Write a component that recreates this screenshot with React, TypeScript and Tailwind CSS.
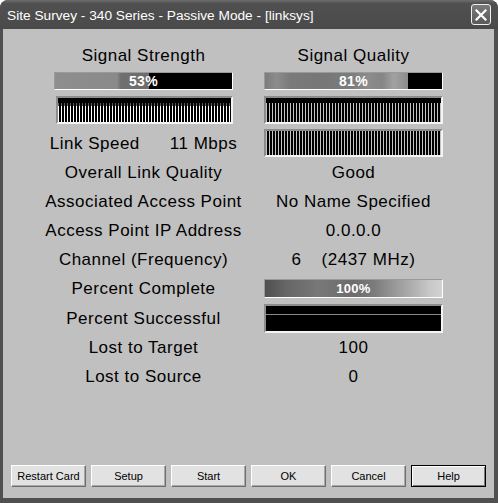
import React from "react";

function Bar({ pct, fill, label, size }: { pct: number; fill: string; label: string; size: string }) {
  return (
    <div className="relative h-full w-full bg-black border-t border-l border-t-[#9a9a9a] border-l-[#9a9a9a] border-b border-r border-b-white border-r-white">
      <div className={`h-full ${fill}`} style={{ width: `${pct}%` }} />
      <span className={`absolute inset-0 flex items-center justify-center text-white font-bold tracking-[0.3px] ${size}`}>{label}</span>
    </div>
  );
}

function Btn({ label, def }: { label: string; def?: boolean }) {
  return (
    <div
      className={
        def
          ? "w-[75px] h-[22px] flex items-center justify-center bg-[#e2e2e2] border border-black shadow-[inset_1px_1px_0_#ffffff,inset_-1px_-1px_0_#7a7a7a] text-[11px] text-black"
          : "w-[75px] h-[22px] flex items-center justify-center bg-[#e2e2e2] border border-t-white border-l-white border-b-[#6e6e6e] border-r-[#6e6e6e] shadow-[inset_-1px_-1px_0_#a8a8a8] text-[11px] text-black"
      }
    >
      {label}
    </div>
  );
}

const row = "grid grid-cols-[179px_179px] gap-x-[31px] justify-center items-center";
const txt = "flex justify-center text-[17px] tracking-[0.5px] leading-none text-black whitespace-nowrap";

export default function App() {
  return (
    <div className="w-[498px] h-[503px] bg-white font-['Liberation_Sans',Arial,sans-serif]">
      <div className="w-[498px] h-[503px] flex flex-col rounded-t-[8px] overflow-hidden bg-[#4c4c4c]">
        {/* Title bar */}
        <div className="h-[29px] flex items-center justify-between pl-[7px] pr-[7px] bg-[linear-gradient(180deg,#6e6e6e_0%,#505050_12%,#4a4a4a_100%)]">
          <span className="text-white text-[13.7px] leading-none pt-[2px] whitespace-nowrap">
            Site Survey - 340 Series - Passive Mode - [linksys]
          </span>
          <div className="w-[20px] h-[21px] rounded-[3px] border border-[#f0f0f0] bg-[linear-gradient(180deg,#7a7a7a_0%,#5a5a5a_100%)] flex items-center justify-center">
            <svg width="12" height="12" viewBox="0 0 12 12">
              <path d="M1.5 1.5 L10.5 10.5 M10.5 1.5 L1.5 10.5" stroke="#ffffff" strokeWidth="2.2" strokeLinecap="square" />
            </svg>
          </div>
        </div>

        {/* Frame + body */}
        <div className="flex-1 flex pl-[3px] pr-[4px] pb-[5px] bg-[#505050]">
          <div className="flex-1 bg-[#c0c0c0] flex flex-col pt-[13px] pb-[11px]">
            {/* headers */}
            <div className={`${row} h-[26px]`}>
              <div className={txt}>Signal Strength</div>
              <div className={txt}>Signal Quality</div>
            </div>
            {/* progress bars */}
            <div className={`${row} h-[18px] mt-[4px]`}>
              <Bar
                pct={53}
                label="53%"
                size="text-[14px]"
                fill="bg-[linear-gradient(90deg,#8e8e8e_0%,#8a8a8a_66%,#707070_70%,#6c6c6c_100%)]"
              />
              <Bar
                pct={81}
                label="81%"
                size="text-[14px]"
                fill="bg-[linear-gradient(90deg,#7c7c7c_0%,#8c8c8c_8%,#7a7a7a_18%,#777777_40%,#7c7c7c_60%,#8c8c8c_72%,#858585_82%,#a2a2a2_90%,#8c8c8c_100%)]"
              />
            </div>
            {/* pattern bars */}
            <div className={`${row} h-[28px] mt-[6px]`}>
              <div className="h-full w-[177px] ml-[2px] flex flex-col border-t-2 border-l-2 border-t-[#8c8c8c] border-l-[#8c8c8c] border-b-2 border-r-2 border-b-[#f4f4f4] border-r-[#f4f4f4] bg-black">
                <div className="h-[5px] bg-black" />
                <div className="h-[3px] bg-[repeating-linear-gradient(90deg,#5a5a5a_0px,#5a5a5a_1px,#000000_1px,#000000_3px)]" />
                <div className="flex-1 bg-[repeating-linear-gradient(90deg,#ffffff_0px,#ffffff_1px,#000000_1px,#000000_3px)]" />
              </div>
              <div className="h-full w-full flex flex-col border-t-2 border-l-2 border-t-[#8c8c8c] border-l-[#8c8c8c] border-b-2 border-r-2 border-b-[#f4f4f4] border-r-[#f4f4f4] bg-black">
                <div className="h-[5px] bg-black" />
                <div className="flex-1 bg-[repeating-linear-gradient(90deg,#c4c4c4_0px,#c4c4c4_1px,#000000_1px,#000000_3px)]" />
              </div>
            </div>
            {/* link speed */}
            <div className={`${row} h-[28px] mt-[5px]`}>
              <div className="flex justify-center gap-[30px]">
                <span className={txt}>Link Speed</span>
                <span className={txt}>11 Mbps</span>
              </div>
              <div className="h-full w-full border-t-2 border-l-2 border-t-[#8c8c8c] border-l-[#8c8c8c] border-b-2 border-r-2 border-b-[#f4f4f4] border-r-[#f4f4f4] bg-[repeating-linear-gradient(90deg,#c4c4c4_0px,#c4c4c4_1px,#000000_1px,#000000_3px)]" />
            </div>
            <div className={`${row} h-[29px] mt-[1px]`}>
              <div className={txt}>Overall Link Quality</div>
              <div className={txt}>Good</div>
            </div>
            <div className={`${row} h-[29px]`}>
              <div className={txt}>Associated Access Point</div>
              <div className={txt}>No Name Specified</div>
            </div>
            <div className={`${row} h-[29px]`}>
              <div className={txt}>Access Point IP Address</div>
              <div className={txt}>0.0.0.0</div>
            </div>
            <div className={`${row} h-[29px]`}>
              <div className={txt}>Channel (Frequency)</div>
              <div className="flex justify-center gap-[20px]">
                <span className={txt}>6</span>
                <span className={txt}>(2437 MHz)</span>
              </div>
            </div>
            <div className={`${row} h-[29px]`}>
              <div className={txt}>Percent Complete</div>
              <div className="h-[19px]">
                <Bar
                  pct={100}
                  label="100%"
                  size="text-[13px]"
                  fill="bg-[linear-gradient(90deg,#505050_0%,#666666_12%,#787878_30%,#6c6c6c_50%,#7c7c7c_62%,#9a9a9a_74%,#b0b0b0_84%,#c8c8c8_93%,#d2d2d2_100%)]"
                />
              </div>
            </div>
            <div className={`${row} h-[30px]`}>
              <div className={txt}>Percent Successful</div>
              <div className="h-[29px] w-full flex flex-col bg-black border-t-2 border-l-2 border-t-[#8c8c8c] border-l-[#8c8c8c] border-b-2 border-r-2 border-b-[#f4f4f4] border-r-[#f4f4f4]">
                <div className="h-[8px]" />
                <div className="h-[1px] bg-[#8a8a8a]" />
              </div>
            </div>
            <div className={`${row} h-[29px]`}>
              <div className={txt}>Lost to Target</div>
              <div className={txt}>100</div>
            </div>
            <div className={`${row} h-[29px]`}>
              <div className={txt}>Lost to Source</div>
              <div className={txt}>0</div>
            </div>

            {/* buttons */}
            <div className="mt-auto flex justify-center gap-[5px]">
              <Btn label="Restart Card" />
              <Btn label="Setup" />
              <Btn label="Start" />
              <Btn label="OK" />
              <Btn label="Cancel" />
              <Btn label="Help" def />
            </div>
          </div>
        </div>
      </div>
    </div>
  );
}
